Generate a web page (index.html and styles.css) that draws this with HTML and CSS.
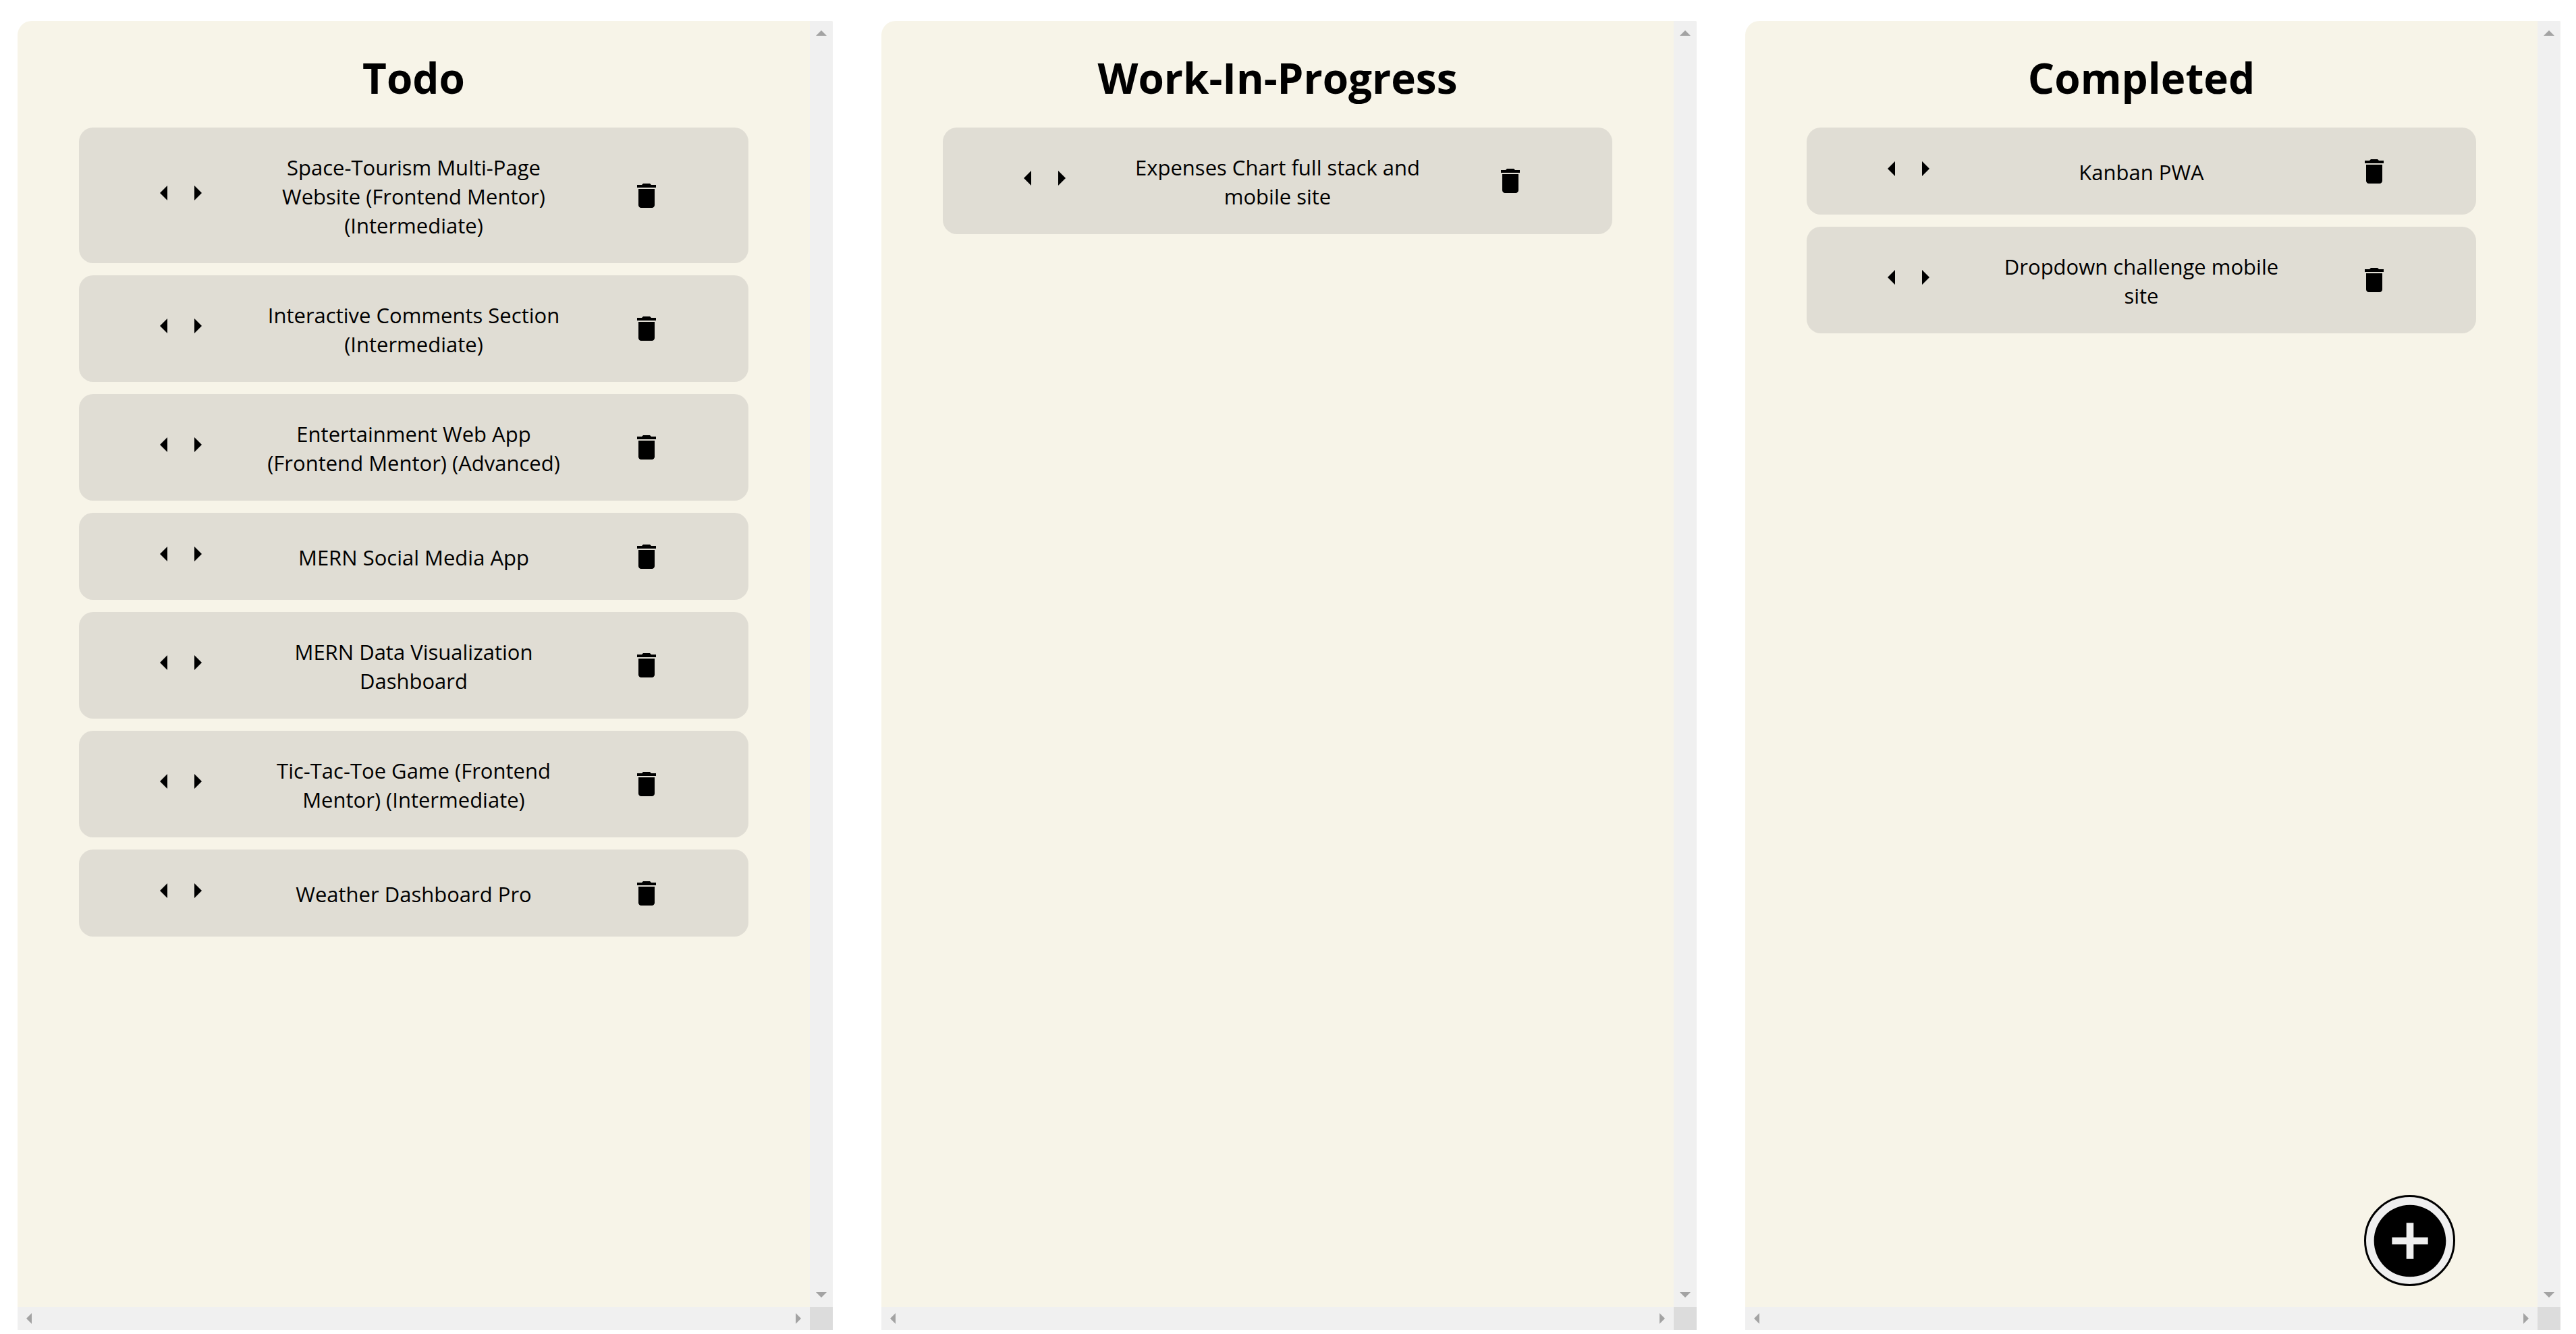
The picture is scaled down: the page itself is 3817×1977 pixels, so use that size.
FILE: index.html
```html
<!DOCTYPE html>
<html lang="en">
<head>
<meta charset="utf-8">
<meta name="viewport" content="width=device-width, initial-scale=1">
<title>Kanban</title>
<link rel="stylesheet" href="styles.css">
</head>
<body>
<svg class="sprite" aria-hidden="true">
  <symbol id="left" viewBox="0 0 11 22"><path d="M11 0v22L0 11z"/></symbol>
  <symbol id="right" viewBox="0 0 11 22"><path d="M0 0v22l11-11z"/></symbol>
  <symbol id="trash" viewBox="0 0 24 24"><path d="M6 19c0 1.1.9 2 2 2h8c1.1 0 2-.9 2-2V7H6v12zM19 4h-3.5l-1-1h-5l-1 1H5v2h14V4z"/></symbol>
  <symbol id="bar-up" viewBox="0 0 16 8"><path d="M0 8h16L8 0z"/></symbol>
  <symbol id="bar-down" viewBox="0 0 16 8"><path d="M0 0h16L8 8z"/></symbol>
  <symbol id="bar-left" viewBox="0 0 8 16"><path d="M8 0v16L0 8z"/></symbol>
  <symbol id="bar-right" viewBox="0 0 8 16"><path d="M0 0v16l8-8z"/></symbol>
</svg>
<main class="board">
  <section class="column">
    <div class="content">
      <h1 class="title">Todo</h1>
      <ul class="cards">
        <li class="card"><div class="moves"><button class="move" aria-label="Move left"><svg><use href="#left"/></svg></button><button class="move" aria-label="Move right"><svg><use href="#right"/></svg></button></div><p class="name">Space-Tourism Multi-Page Website (Frontend Mentor) (Intermediate)</p><button class="delete" aria-label="Delete"><svg><use href="#trash"/></svg></button></li>
        <li class="card"><div class="moves"><button class="move" aria-label="Move left"><svg><use href="#left"/></svg></button><button class="move" aria-label="Move right"><svg><use href="#right"/></svg></button></div><p class="name">Interactive Comments Section (Intermediate)</p><button class="delete" aria-label="Delete"><svg><use href="#trash"/></svg></button></li>
        <li class="card"><div class="moves"><button class="move" aria-label="Move left"><svg><use href="#left"/></svg></button><button class="move" aria-label="Move right"><svg><use href="#right"/></svg></button></div><p class="name">Entertainment Web App (Frontend Mentor) (Advanced)</p><button class="delete" aria-label="Delete"><svg><use href="#trash"/></svg></button></li>
        <li class="card"><div class="moves"><button class="move" aria-label="Move left"><svg><use href="#left"/></svg></button><button class="move" aria-label="Move right"><svg><use href="#right"/></svg></button></div><p class="name">MERN Social Media App</p><button class="delete" aria-label="Delete"><svg><use href="#trash"/></svg></button></li>
        <li class="card"><div class="moves"><button class="move" aria-label="Move left"><svg><use href="#left"/></svg></button><button class="move" aria-label="Move right"><svg><use href="#right"/></svg></button></div><p class="name">MERN Data Visualization Dashboard</p><button class="delete" aria-label="Delete"><svg><use href="#trash"/></svg></button></li>
        <li class="card"><div class="moves"><button class="move" aria-label="Move left"><svg><use href="#left"/></svg></button><button class="move" aria-label="Move right"><svg><use href="#right"/></svg></button></div><p class="name">Tic-Tac-Toe Game (Frontend Mentor) (Intermediate)</p><button class="delete" aria-label="Delete"><svg><use href="#trash"/></svg></button></li>
        <li class="card"><div class="moves"><button class="move" aria-label="Move left"><svg><use href="#left"/></svg></button><button class="move" aria-label="Move right"><svg><use href="#right"/></svg></button></div><p class="name">Weather Dashboard Pro</p><button class="delete" aria-label="Delete"><svg><use href="#trash"/></svg></button></li>
      </ul>
    </div>
    <div class="bar vertical" aria-hidden="true"><svg><use href="#bar-up"/></svg><svg><use href="#bar-down"/></svg></div>
    <div class="bar horizontal" aria-hidden="true"><svg><use href="#bar-left"/></svg><svg><use href="#bar-right"/></svg></div>
    <div class="corner"></div>
  </section>
  <section class="column">
    <div class="content">
      <h1 class="title">Work-In-Progress</h1>
      <ul class="cards">
        <li class="card"><div class="moves"><button class="move" aria-label="Move left"><svg><use href="#left"/></svg></button><button class="move" aria-label="Move right"><svg><use href="#right"/></svg></button></div><p class="name">Expenses Chart full stack and mobile site</p><button class="delete" aria-label="Delete"><svg><use href="#trash"/></svg></button></li>
      </ul>
    </div>
    <div class="bar vertical" aria-hidden="true"><svg><use href="#bar-up"/></svg><svg><use href="#bar-down"/></svg></div>
    <div class="bar horizontal" aria-hidden="true"><svg><use href="#bar-left"/></svg><svg><use href="#bar-right"/></svg></div>
    <div class="corner"></div>
  </section>
  <section class="column">
    <div class="content">
      <h1 class="title">Completed</h1>
      <ul class="cards">
        <li class="card"><div class="moves"><button class="move" aria-label="Move left"><svg><use href="#left"/></svg></button><button class="move" aria-label="Move right"><svg><use href="#right"/></svg></button></div><p class="name">Kanban PWA</p><button class="delete" aria-label="Delete"><svg><use href="#trash"/></svg></button></li>
        <li class="card"><div class="moves"><button class="move" aria-label="Move left"><svg><use href="#left"/></svg></button><button class="move" aria-label="Move right"><svg><use href="#right"/></svg></button></div><p class="name">Dropdown challenge mobile site</p><button class="delete" aria-label="Delete"><svg><use href="#trash"/></svg></button></li>
      </ul>
    </div>
    <div class="bar vertical" aria-hidden="true"><svg><use href="#bar-up"/></svg><svg><use href="#bar-down"/></svg></div>
    <div class="bar horizontal" aria-hidden="true"><svg><use href="#bar-left"/></svg><svg><use href="#bar-right"/></svg></div>
    <div class="corner"></div>
  </section>
</main>
<button class="add" aria-label="Add task"><svg viewBox="0 0 24 24"><path d="M12 2C6.48 2 2 6.48 2 12s4.48 10 10 10 10-4.480 10-10S17.520 2 12 2zm5 11h-4v4h-2v-4H7v-2h4V7h2v4h4v2z"/></svg></button>
</body>
</html>
```
FILE: styles.css
```css
* {
  box-sizing: border-box;
}

body {
  margin: 0;
  background: #fff;
  color: #000;
  font-family: "Segoe UI", "Open Sans", "Noto Sans", sans-serif;
}

button {
  padding: 0;
  border: 0;
  background: none;
  color: inherit;
  cursor: pointer;
}

svg {
  display: block;
  fill: currentColor;
}

.sprite {
  position: absolute;
  width: 0;
  height: 0;
}

.board {
  display: grid;
  grid-template-columns: repeat(3, minmax(0, 1fr));
  gap: 72px;
  min-height: 100vh;
  padding: 31px 23px 6px 26px;
}

.column {
  display: grid;
  grid-template: minmax(0, 1fr) 34px / minmax(0, 1fr) 34px;
  overflow: hidden;
  border-radius: 21px 2px 0 0;
  background: #f7f4e8;
}

.content {
  padding: 40px 91px;
}

.title {
  margin: 0 0 30px;
  font-size: 62px;
  font-weight: 700;
  line-height: 88px;
  text-align: center;
}

.cards {
  display: grid;
  gap: 18px;
  margin: 0;
  padding: 0;
  list-style: none;
}

.card {
  display: grid;
  grid-template-columns: minmax(0, 1fr) 444px minmax(0, 1fr);
  align-items: center;
  min-height: 129px;
  padding: 34px 28px;
  border-radius: 21px;
  background: #e0ddd4;
}

.moves {
  display: flex;
  justify-content: center;
  gap: 40px;
  padding-bottom: 8px;
}

.move svg {
  width: 11px;
  height: 22px;
}

.name {
  margin: 0;
  padding-top: 4px;
  font-size: 31px;
  line-height: 43px;
  text-align: center;
}

.delete {
  justify-self: center;
}

.delete svg {
  width: 48px;
  height: 48px;
}

.bar {
  display: flex;
  align-items: center;
  justify-content: space-between;
  background: #f0f0f0;
  color: #a3a3a3;
}

.vertical {
  flex-direction: column;
  padding: 14px 0;
}

.vertical svg {
  width: 16px;
  height: 8px;
}

.horizontal {
  padding: 0 13px;
}

.horizontal svg {
  width: 8px;
  height: 16px;
}

.corner {
  background: #dcdcdc;
}

.add {
  position: fixed;
  right: 179px;
  bottom: 71px;
  display: grid;
  place-items: center;
  width: 135px;
  height: 135px;
  border: 3px solid #000;
  border-radius: 50%;
  background: #efefef;
}

.add svg {
  width: 128px;
  height: 128px;
}
```
